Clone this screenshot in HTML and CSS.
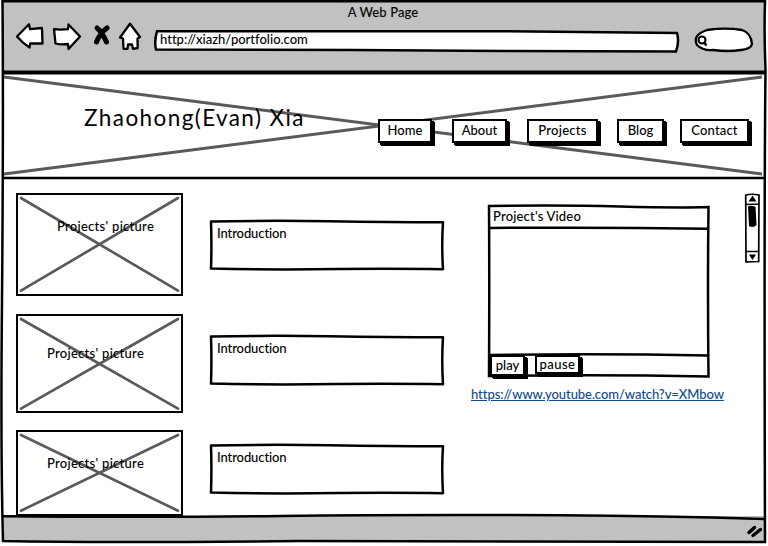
FILE: index.html
```html
<!DOCTYPE html>
<html lang="en">
<head>
<meta charset="utf-8">
<title>A Web Page</title>
<link rel="stylesheet" href="styles.css">
</head>
<body>
<svg class="defs" width="0" height="0" aria-hidden="true">
  <symbol id="sketch-box" viewBox="0 0 236 52">
    <path d="M2 2.500 Q60 1.300 120 2.200 T234 3.200 Q232.500 26 234 50.300 Q190 49.500 130 50 Q60 51 2 49.500 Q2.800 26 2 2.500Z" fill="#fff" stroke="#000" stroke-width="2.500" stroke-linejoin="round"/>
  </symbol>
</svg>
<div class="window">
  <header class="chrome">
    <div class="page-title"><span class="t-page">A Web Page</span></div>
    <div class="toolbar">
      <svg class="tools" width="130" height="32" viewBox="0 0 130 32" fill="#fff" stroke="#000" stroke-width="2.300" stroke-linejoin="round" stroke-linecap="round">
        <path d="M3 15.500 L15 3.200 L16 8.200 L28 7 L28.500 22.500 L16.300 22.300 L15.500 26.500 Q8.500 22 3 15.500Z"/>
        <path d="M40 8.200 Q46.500 9 54 8.200 L54.500 3.500 L66 15.500 L54.500 28 L54 23 Q47.500 24 41.500 22.500Z"/>
        <path d="M83 7 Q88 11 92.500 21 M93 7 Q86 12 82.500 21" stroke-width="5"/>
        <path d="M116 2.800 L126 16 L123.500 17.500 L123.700 27 L119 27.800 L118 23.500 L114 23.500 L113.500 27.800 L109.500 27.800 L109 17.500 L106 16.500Z"/>
      </svg>
      <div class="address">
        <svg class="under" width="528" height="24" viewBox="0 0 528 24"><path d="M4 2.300 L350 2.300 L524 4 Q526.500 13 523 22.500 L350 22 L200 21 L3 20.500 Q1 12 4 2.300Z" fill="#fff" stroke="#000" stroke-width="2.500"/></svg>
        <span class="t-url">http://xiazh/portfolio.com</span>
      </div>
      <svg class="search" width="62" height="28" viewBox="0 0 62 28" fill="none" stroke="#000" stroke-width="2.300">
        <path d="M14 4 Q32 1.300 49 4 Q58 7 59 18 Q58 23 48 24 Q35 26 20 24 Q10 25 4 19 Q-1 9 14 4Z" fill="#fff"/>
        <circle cx="9" cy="14" r="3.500" stroke-width="2.200"/><path d="M11 16.500 L13.500 19.500" stroke-width="2.500"/>
      </svg>
    </div>
  </header>
  <section class="banner">
    <svg class="under" width="768" height="106" viewBox="0 73 768 106" stroke="#5a5a5a" stroke-width="2.900"><path d="M4 77 L762 174 M4 174 L762 77"/></svg>
    <h1><span class="t-name">Zhaohong(Evan) Xia</span></h1>
    <nav>
      <a class="btn home"><span>Home</span></a>
      <a class="btn about"><span>About</span></a>
      <a class="btn projects"><span>Projects</span></a>
      <a class="btn blog"><span>Blog</span></a>
      <a class="btn contact"><span>Contact</span></a>
    </nav>
  </section>
  <main>
    <div class="pictures">
      <div class="picture first"><svg class="under" viewBox="0 0 163 99" preserveAspectRatio="none"><path d="M3 3 L160 96 M3 96 L160 3"/></svg><span class="t-pic">Projects' picture</span></div>
      <div class="picture second"><svg class="under" viewBox="0 0 163 96" preserveAspectRatio="none"><path d="M3 3 L160 93 M3 93 L160 3"/></svg><span class="t-pic">Projects' picture</span></div>
      <div class="picture third"><svg class="under" viewBox="0 0 163 81" preserveAspectRatio="none"><path d="M3 3 L160 78 M3 78 L160 3"/></svg><span class="t-pic">Projects' picture</span></div>
    </div>
    <div class="intros">
      <div class="intro"><svg class="under" width="236" height="52"><use href="#sketch-box"/></svg><span class="t-intro">Introduction</span></div>
      <div class="intro"><svg class="under" width="236" height="52"><use href="#sketch-box"/></svg><span class="t-intro">Introduction</span></div>
      <div class="intro"><svg class="under" width="236" height="52"><use href="#sketch-box"/></svg><span class="t-intro">Introduction</span></div>
    </div>
    <div class="media">
      <div class="video">
        <svg class="under" width="224" height="175" viewBox="487 203 224 175" fill="none" stroke="#000" stroke-width="2.500"><path d="M489 206 Q560 205 620 206.500 T708.500 207 Q707.500 290 708.500 376.500 Q600 374.500 489 376 Q489.500 280 489 206Z M489 228 Q600 227 708 228.800 M489 355 Q600 353.500 708 355.500"/></svg>
        <div class="video-title"><span class="t-video">Project's Video</span></div>
        <div class="screen"></div>
        <div class="controls">
          <button class="btn play"><span class="t-play">play</span></button>
          <button class="btn pause"><span class="t-pause">pause</span></button>
        </div>
      </div>
      <a class="link"><span class="t-link">https://www.youtube.com/watch?v=XMbow</span></a>
    </div>
    <svg class="scroll" width="17" height="71" viewBox="744 193 17 71" fill="none" stroke="#000" stroke-width="1.700">
      <path d="M745.700 195 Q752 193.500 759 195 L758.700 261.500 L746 261.800Z M745.700 204.500 L759 204 M746 251.500 L759 251.500" fill="#fff"/>
      <path d="M748.500 201.500 L752.500 195.500 L756.500 201.500Z M749 254.500 L756 254.500 L752.500 260Z" fill="#000" stroke="none"/>
      <path d="M748 206.500 Q752 205 755.500 207 L756.500 225 Q753 228.500 749 226Z" fill="#000" stroke="none"/>
    </svg>
  </main>
  <footer><svg width="20" height="16" viewBox="0 0 20 16" stroke="#000" stroke-width="3.500" stroke-linecap="round"><path d="M5 9.500 L10.500 4.500 M9 12.500 L16.500 6.500"/></svg></footer>
  <svg class="frame" width="768" height="546" viewBox="0 0 768 546" fill="none" stroke="#000" stroke-width="2.500">
    <path d="M2.500 1.300 L765 1.300 Q764 30 765.500 70 Q764 200 765 542 Q500 540.500 300 541 Q100 543 3 541 Q.5 450 2 300 Q3.500 120 2.500 1.300Z"/>
    <path d="M2 72.500 L765 72.500" stroke-width="4"/>
    <path d="M2 178 L765 178" stroke-width="2.700"/>
    <path d="M2 516.300 Q150 517.500 280 516 T560 515.300 Q660 516 765 519"/>
  </svg>
</div>
</body>
</html>
```
FILE: styles.css
```css
* { box-sizing: border-box; }
body { margin: 0; background: #fff; color: #000; font: 500 13px/16px Lato, "Noto Sans", sans-serif; font-variant-ligatures: none; overflow: hidden; }
.defs { position: absolute; }
.window { position: relative; display: flex; flex-direction: column; width: 768px; height: 546px; }
.frame { position: absolute; inset: 0; pointer-events: none; }
.under { position: absolute; inset: 0; }
span { position: relative; white-space: nowrap; }
.chrome { height: 73px; margin: 0 3px; padding: 4px 0 0; background: #c1c1c1; }
.page-title { height: 17px; padding-right: 2px; text-align: center; }
.t-page { letter-spacing: 0.1px; }
.toolbar { display: flex; padding-left: 11px; }
.address { position: relative; width: 528px; height: 24px; margin: 8px 0 0 9px; padding: 2px 0 0 7px; }
.search { margin: 5px 0 0 12px; }
.banner { position: relative; display: flex; height: 105px; }
h1 { width: 378px; margin: 0; padding: 32px 0 0 84px; font-size: 22.5px; line-height: 26px; font-weight: 400; }
.t-name { letter-spacing: 1.4px; }
nav { display: flex; gap: 20px; padding-top: 45.5px; }
.btn { position: relative; display: block; height: 24px; padding: 1.5px 0 0; border: 2px solid #000; background: #fff; box-shadow: 2px 2px #000, 3px 3px #000; text-align: center; font: inherit; color: inherit; }
.home { width: 54px; }
.about { width: 55px; }
.projects { width: 71px; letter-spacing: 0.28px; }
.blog { width: 47px; margin-left: -1px; }
.contact { width: 69px; margin-left: -4px; letter-spacing: 0.18px; }
main { display: flex; height: 338px; padding-left: 16px; }
.pictures { display: flex; flex-direction: column; gap: 17px; width: 193px; padding-top: 15px; }
.picture { position: relative; width: 167px; border: 2px solid #000; }
.picture svg { width: 100%; height: 100%; stroke: #5a5a5a; stroke-width: 2.7; stroke-linecap: round; }
.t-pic { letter-spacing: 0.28px; }
.first { height: 103px; padding: 23px 0 0 39px; }
.second { height: 100px; margin-top: 1px; padding: 29px 0 0 29px; }
.third { height: 86px; padding: 23px 0 0 29px; }
.intros { width: 278px; padding-top: 41px; }
.intro { position: relative; width: 236px; height: 52px; margin-bottom: 63px; padding: 6px 0 0 8px; }
.intro:nth-child(2) { margin-bottom: 57px; }
.t-intro { letter-spacing: -0.1px; }
.media { width: 257px; padding-top: 25px; }
.video { position: relative; width: 224px; height: 175px; }
.video-title { height: 26px; padding: 5px 0 0 6px; }
.t-video { letter-spacing: 0.18px; }
.screen { height: 126px; }
.controls { display: flex; gap: 10px; padding-left: 3px; }
.controls span { display: block; }
.play { width: 35px; height: 21px; padding: 0; line-height: 15px; }
.pause { width: 45px; height: 19px; padding: 0; line-height: 13px; }
.t-pause { letter-spacing: 0.45px; }
.link { display: block; margin: 8px 0 0 -16px; color: #0f4a8f; text-decoration: underline; letter-spacing: -0.07px; }
.scroll { margin-top: 15px; }
footer { display: flex; justify-content: flex-end; height: 25px; margin: 0 3px; padding: 7px 1px 0 0; background: #c1c1c1; }
```
